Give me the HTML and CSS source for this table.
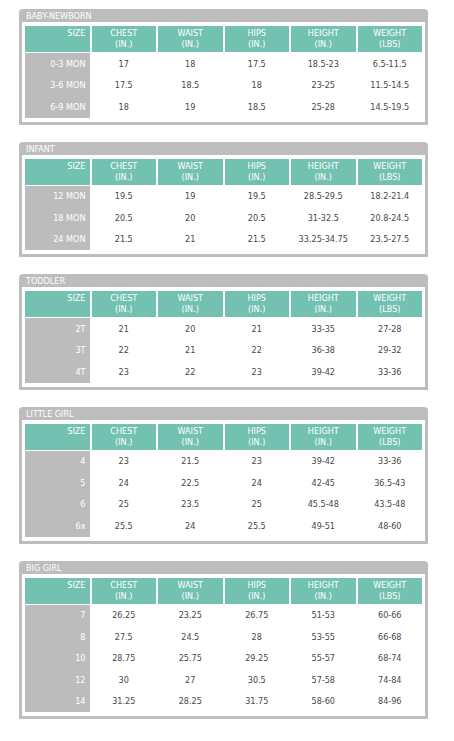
FILE: index.html
```html
<!DOCTYPE html>
<html lang="en">
<head>
    <meta charset="UTF-8">
    <meta name="viewport" content="width=device-width, initial-scale=1.0">
    <title>Size chart</title>
    <link rel="stylesheet" href="styles.css">
</head>
<body>
    <div class="charts">

        <!-- baby -->
        <div class="chart">
            <div class="chart-title">Baby-Newborn</div>
            <div class="chart-body">
                <table class="size-table">
                    <thead>
                        <tr><th class="size">Size</th><th>Chest<br>(In.)</th><th>Waist<br>(In.)</th><th>Hips<br>(In.)</th><th>Height<br>(In.)</th><th>Weight<br>(Lbs)</th></tr>
                    </thead>
                    <tbody>
                        <tr><td class="size">0-3 Mon</td><td>17</td><td>18</td><td>17.5</td><td>18.5-23</td><td>6.5-11.5</td></tr>
                        <tr><td class="size">3-6 Mon</td><td>17.5</td><td>18.5</td><td>18</td><td>23-25</td><td>11.5-14.5</td></tr>
                        <tr><td class="size">6-9 Mon</td><td>18</td><td>19</td><td>18.5</td><td>25-28</td><td>14.5-19.5</td></tr>
                    </tbody>
                </table>
            </div>
        </div>

        <!-- infant -->
        <div class="chart">
            <div class="chart-title">Infant</div>
            <div class="chart-body">
                <table class="size-table">
                    <thead>
                        <tr><th class="size">Size</th><th>Chest<br>(In.)</th><th>Waist<br>(In.)</th><th>Hips<br>(In.)</th><th>Height<br>(In.)</th><th>Weight<br>(Lbs)</th></tr>
                    </thead>
                    <tbody>
                        <tr><td class="size">12 Mon</td><td>19.5</td><td>19</td><td>19.5</td><td>28.5-29.5</td><td>18.2-21.4</td></tr>
                        <tr><td class="size">18 Mon</td><td>20.5</td><td>20</td><td>20.5</td><td>31-32.5</td><td>20.8-24.5</td></tr>
                        <tr><td class="size">24 Mon</td><td>21.5</td><td>21</td><td>21.5</td><td>33.25-34.75</td><td>23.5-27.5</td></tr>
                    </tbody>
                </table>
            </div>
        </div>

        <!-- toddler -->
        <div class="chart">
            <div class="chart-title">Toddler</div>
            <div class="chart-body">
                <table class="size-table">
                    <thead>
                        <tr><th class="size">Size</th><th>Chest<br>(In.)</th><th>Waist<br>(In.)</th><th>Hips<br>(In.)</th><th>Height<br>(In.)</th><th>Weight<br>(Lbs)</th></tr>
                    </thead>
                    <tbody>
                        <tr><td class="size">2T</td><td>21</td><td>20</td><td>21</td><td>33-35</td><td>27-28</td></tr>
                        <tr><td class="size">3T</td><td>22</td><td>21</td><td>22</td><td>36-38</td><td>29-32</td></tr>
                        <tr><td class="size">4T</td><td>23</td><td>22</td><td>23</td><td>39-42</td><td>33-36</td></tr>
                    </tbody>
                </table>
            </div>
        </div>

        <!-- little girl -->
        <div class="chart">
            <div class="chart-title">Little Girl</div>
            <div class="chart-body">
                <table class="size-table">
                    <thead>
                        <tr><th class="size">Size</th><th>Chest<br>(In.)</th><th>Waist<br>(In.)</th><th>Hips<br>(In.)</th><th>Height<br>(In.)</th><th>Weight<br>(Lbs)</th></tr>
                    </thead>
                    <tbody>
                        <tr><td class="size">4</td><td>23</td><td>21.5</td><td>23</td><td>39-42</td><td>33-36</td></tr>
                        <tr><td class="size">5</td><td>24</td><td>22.5</td><td>24</td><td>42-45</td><td>36.5-43</td></tr>
                        <tr><td class="size">6</td><td>25</td><td>23.5</td><td>25</td><td>45.5-48</td><td>43.5-48</td></tr>
                        <tr><td class="size lower">6x</td><td>25.5</td><td>24</td><td>25.5</td><td>49-51</td><td>48-60</td></tr>
                    </tbody>
                </table>
            </div>
        </div>

        <!-- big girl -->
        <div class="chart">
            <div class="chart-title">Big Girl</div>
            <div class="chart-body">
                <table class="size-table">
                    <thead>
                        <tr><th class="size">Size</th><th>Chest<br>(In.)</th><th>Waist<br>(In.)</th><th>Hips<br>(In.)</th><th>Height<br>(In.)</th><th>Weight<br>(Lbs)</th></tr>
                    </thead>
                    <tbody>
                        <tr><td class="size">7</td><td>26.25</td><td>23.25</td><td>26.75</td><td>51-53</td><td>60-66</td></tr>
                        <tr><td class="size">8</td><td>27.5</td><td>24.5</td><td>28</td><td>53-55</td><td>66-68</td></tr>
                        <tr><td class="size">10</td><td>28.75</td><td>25.75</td><td>29.25</td><td>55-57</td><td>68-74</td></tr>
                        <tr><td class="size">12</td><td>30</td><td>27</td><td>30.5</td><td>57-58</td><td>74-84</td></tr>
                        <tr><td class="size">14</td><td>31.25</td><td>28.25</td><td>31.75</td><td>58-60</td><td>84-96</td></tr>
                    </tbody>
                </table>
            </div>
        </div>

    </div>
</body>
</html>
```

FILE: styles.css
```css
* {
    margin: 0;
    padding: 0;
    box-sizing: border-box;
}
body {
    background-color: #fff;
    font-family: "DejaVu Sans Condensed", "DejaVu Sans", sans-serif;
    font-stretch: condensed;
    font-size: 9px;
    color: #474747;
}
.charts {
    padding: 9px 0 0 19px;
}
.chart {
    width: 409px;
    background-color: #bdbdbd;
    border-radius: 4px 4px 0 0;
    padding: 0 3px 3px 3px;
    margin-bottom: 17px;
}
.chart-title {
    height: 13px;
    line-height: 14px;
    padding-left: 4px;
    color: #fff;
    text-transform: uppercase;
}
.chart-body {
    background-color: #fff;
    padding: 4px 1px 4px 1px;
}
.size-table {
    width: 100%;
    border-collapse: separate;
    border-spacing: 2px 0;
    table-layout: fixed;
}
.size-table th {
    height: 27px;
    background-color: #73c2b1;
    color: #fff;
    font-weight: normal;
    text-transform: uppercase;
    line-height: 11px;
    padding-top: 2px;
    vertical-align: top;
    text-align: center;
    border-bottom: 1px solid #fff;
}
.size-table td {
    height: 21.5px;
    text-align: center;
    vertical-align: middle;
}
.size-table .size {
    text-align: right;
    padding-right: 4px;
}
.size-table td.size {
    background-color: #bcbcbc;
    color: #fff;
    text-transform: uppercase;
}
.size-table td.lower {
    text-transform: none;
}
```
